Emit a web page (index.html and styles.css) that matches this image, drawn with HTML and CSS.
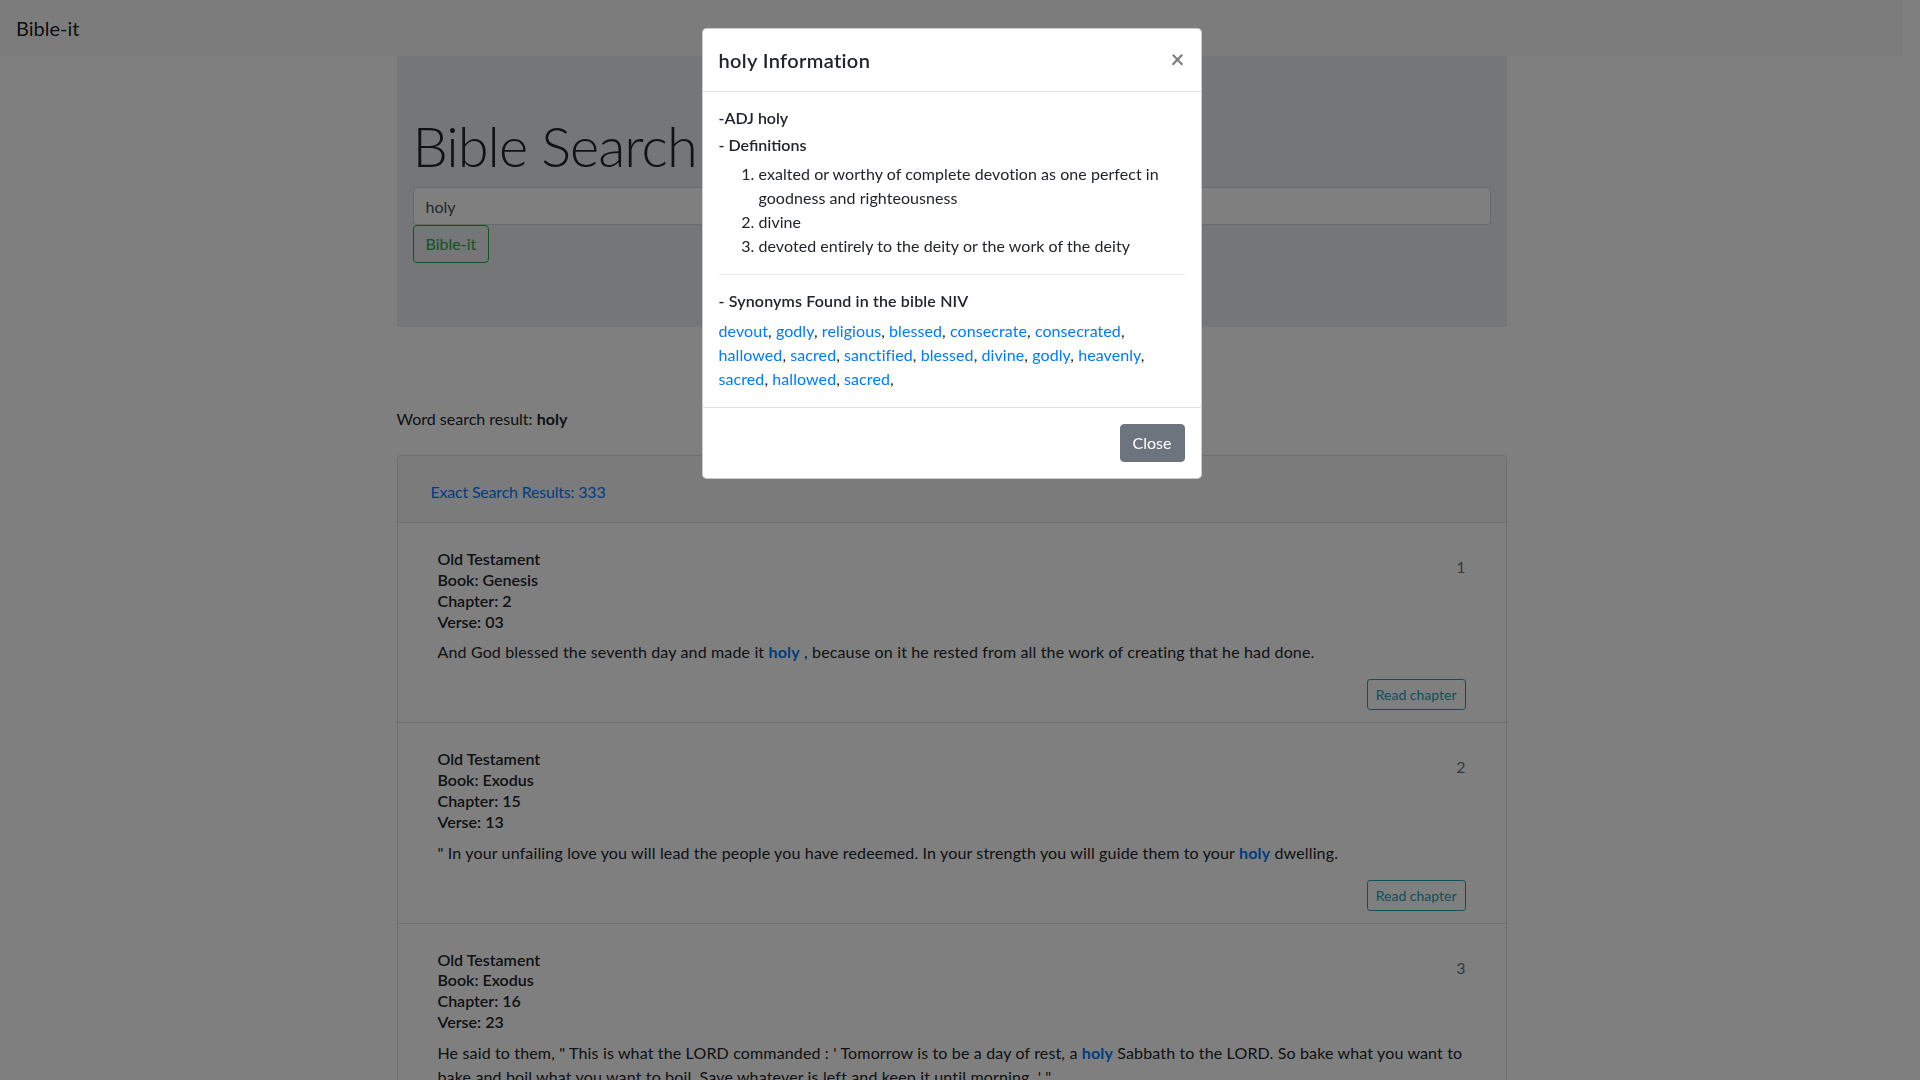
FILE: index.html
```html
<!DOCTYPE html>
<html lang="en">
<head>
<meta charset="utf-8">
<title>Bible-it</title>
<link rel="stylesheet" href="styles.css">
</head>
<body>
<nav class="navbar"><a class="brand" href="#">Bible-it</a></nav>
<main class="container">
  <section class="jumbotron">
    <h1 class="display">Bible Search</h1>
    <form class="search">
      <input class="form-control" type="text" value="holy">
      <button class="btn btn-outline-success" type="button">Bible-it</button>
    </form>
  </section>
  <p class="word-result">Word search result: <b>holy</b></p>
  <div class="card">
    <div class="card-header"><a href="#">Exact Search Results: 333</a></div>
    <ul class="results">
      <li class="result">
        <div class="result-top">
          <div class="meta">
            <div>Old Testament</div>
            <div>Book: Genesis</div>
            <div>Chapter: 2</div>
            <div>Verse: 03</div>
          </div>
          <span class="num">1</span>
        </div>
        <p class="verse">And God blessed the seventh day and made it <a class="hl" href="#">holy</a> , because on it he rested from all the work of creating that he had done.</p>
        <div class="actions"><button class="btn btn-sm btn-outline-info" type="button">Read chapter</button></div>
      </li>
      <li class="result">
        <div class="result-top">
          <div class="meta">
            <div>Old Testament</div>
            <div>Book: Exodus</div>
            <div>Chapter: 15</div>
            <div>Verse: 13</div>
          </div>
          <span class="num">2</span>
        </div>
        <p class="verse">" In your unfailing love you will lead the people you have redeemed. In your strength you will guide them to your <a class="hl" href="#">holy</a> dwelling.</p>
        <div class="actions"><button class="btn btn-sm btn-outline-info" type="button">Read chapter</button></div>
      </li>
      <li class="result">
        <div class="result-top">
          <div class="meta">
            <div>Old Testament</div>
            <div>Book: Exodus</div>
            <div>Chapter: 16</div>
            <div>Verse: 23</div>
          </div>
          <span class="num">3</span>
        </div>
        <p class="verse">He said to them, " This is what the LORD commanded : ' Tomorrow is to be a day of rest, a <a class="hl" href="#">holy</a> Sabbath to the LORD. So bake what you want to bake and boil what you want to boil. Save whatever is left and keep it until morning. ' "</p>
        <div class="actions"><button class="btn btn-sm btn-outline-info" type="button">Read chapter</button></div>
      </li>
    </ul>
  </div>
</main>

<div class="backdrop"></div>
<div class="modal">
  <div class="modal-dialog">
    <div class="modal-content">
      <div class="modal-header">
        <h5 class="modal-title">holy Information</h5>
        <button class="close" type="button" aria-label="Close">&times;</button>
      </div>
      <div class="modal-body">
        <h6>-ADJ holy</h6>
        <h6>- Definitions</h6>
        <ol class="defs">
          <li>exalted or worthy of complete devotion as one perfect in goodness and righteousness</li>
          <li>divine</li>
          <li>devoted entirely to the deity or the work of the deity</li>
        </ol>
        <hr>
        <h6 class="syn-title">- Synonyms Found in the bible NIV</h6>
        <div class="synonyms"><a href="#">devout</a>, <a href="#">godly</a>, <a href="#">religious</a>, <a href="#">blessed</a>, <a href="#">consecrate</a>, <a href="#">consecrated</a>, <a href="#">hallowed</a>, <a href="#">sacred</a>, <a href="#">sanctified</a>, <a href="#">blessed</a>, <a href="#">divine</a>, <a href="#">godly</a>, <a href="#">heavenly</a>, <a href="#">sacred</a>, <a href="#">hallowed</a>, <a href="#">sacred</a>,</div>
      </div>
      <div class="modal-footer">
        <button class="btn btn-secondary" type="button">Close</button>
      </div>
    </div>
  </div>
</div>
</body>
</html>
```

FILE: styles.css
```css
* { box-sizing: border-box; }
html, body { height: 100%; }
body {
  margin: 0;
  padding-right: 17px;
  font-family: "Lato", "Noto Sans", sans-serif;
  font-size: 16px;
  line-height: 1.5;
  color: #212529;
  background: #fff;
  overflow: hidden;
}
a { color: #007bff; text-decoration: none; }

.navbar {
  display: flex;
  align-items: center;
  height: 56px;
  padding: 8px 16px;
  background: #f8f9fa;
}
.brand {
  font-size: 20px;
  line-height: 30px;
  color: rgba(0,0,0,.9);
}

.container {
  width: 1140px;
  margin: 0 auto;
  padding: 0 15px;
}
.jumbotron {
  background: #e9ecef;
  padding: 56px 16px 64px;
  margin-bottom: 80px;
}
.display {
  margin: 0 0 8px;
  font-size: 56px;
  font-weight: 300;
  line-height: 1.2;
  letter-spacing: -1px;
}
.search { margin: 0; }
.form-control {
  display: block;
  width: 100%;
  height: 38px;
  padding: 6px 12px;
  font: inherit;
  color: #495057;
  background: #fff;
  border: 1px solid #ced4da;
  border-radius: 4px;
}
.btn {
  display: inline-block;
  padding: 6px 12px;
  font: inherit;
  font-size: 16px;
  line-height: 24px;
  border: 1px solid transparent;
  border-radius: 4px;
  background: transparent;
  cursor: pointer;
}
.btn-outline-success { color: #28a745; border-color: #28a745; }
.btn-outline-info { color: #17a2b8; border-color: #17a2b8; }
.btn-sm { padding: 4px 8px; font-size: 14px; line-height: 21px; border-radius: 3.2px; }
.btn-secondary { color: #fff; background: #6c757d; border-color: #6c757d; }

.word-result { margin: 0 0 24px; }

.card {
  border: 1px solid rgba(0,0,0,.125);
  border-radius: 4px;
  background: #fff;
}
.card-header {
  padding: 24px 33px 18px;
  background: rgba(0,0,0,.03);
  border-bottom: 1px solid rgba(0,0,0,.125);
  letter-spacing: -0.2px;
}
.results { list-style: none; margin: 0; padding: 0; }
.result {
  padding: 26px 40px 12px;
  border-bottom: 1px solid rgba(0,0,0,.125);
}
.result-top { display: flex; justify-content: space-between; align-items: flex-start; }
.meta { font-weight: 600; line-height: 20.8px; }
.num { color: #6c757d; margin-top: 6px; }
.verse { margin: 8px 0 15px; letter-spacing: 0.15px; }
.hl { font-weight: 700; }
.actions { display: flex; justify-content: flex-end; }

.backdrop {
  position: fixed;
  inset: 0;
  background: rgba(0,0,0,.5);
}
.modal {
  position: fixed;
  inset: 0;
  padding-right: 17px;
}
.modal-dialog { width: 500px; margin: 28px auto; }
.modal-content {
  background: #fff;
  border: 1px solid rgba(0,0,0,.2);
  border-radius: 4.8px;
}
.modal-header {
  display: flex;
  align-items: flex-start;
  padding: 16px;
  border-bottom: 1px solid #dee2e6;
}
.modal-title { margin: 0; font-size: 20px; font-weight: 600; line-height: 1.5; letter-spacing: 0.35px; }
.close {
  margin: -16px -16px -16px auto;
  padding: 18px 16px 14px;
  font: inherit;
  font-size: 24px;
  font-weight: 700;
  line-height: 1;
  color: #000;
  opacity: .5;
  text-shadow: 0 1px 0 #fff;
  background: transparent;
  border: 0;
}
.modal-body { padding: 16px; }
.modal-body h6 { margin: 0 0 8px; font-size: 16px; font-weight: 600; line-height: 1.2; }
.modal-body .syn-title { letter-spacing: 0.15px; }
.defs { margin: 0 0 16px; padding-left: 40px; letter-spacing: 0.05px; }
.modal-body hr { margin: 16px 0; border: 0; border-top: 1px solid rgba(0,0,0,.1); }
.synonyms { margin: 0; letter-spacing: 0.08px; }
.modal-footer {
  display: flex;
  justify-content: flex-end;
  padding: 12px;
  border-top: 1px solid #dee2e6;
}
.modal-footer .btn { margin: 4px; }
```
